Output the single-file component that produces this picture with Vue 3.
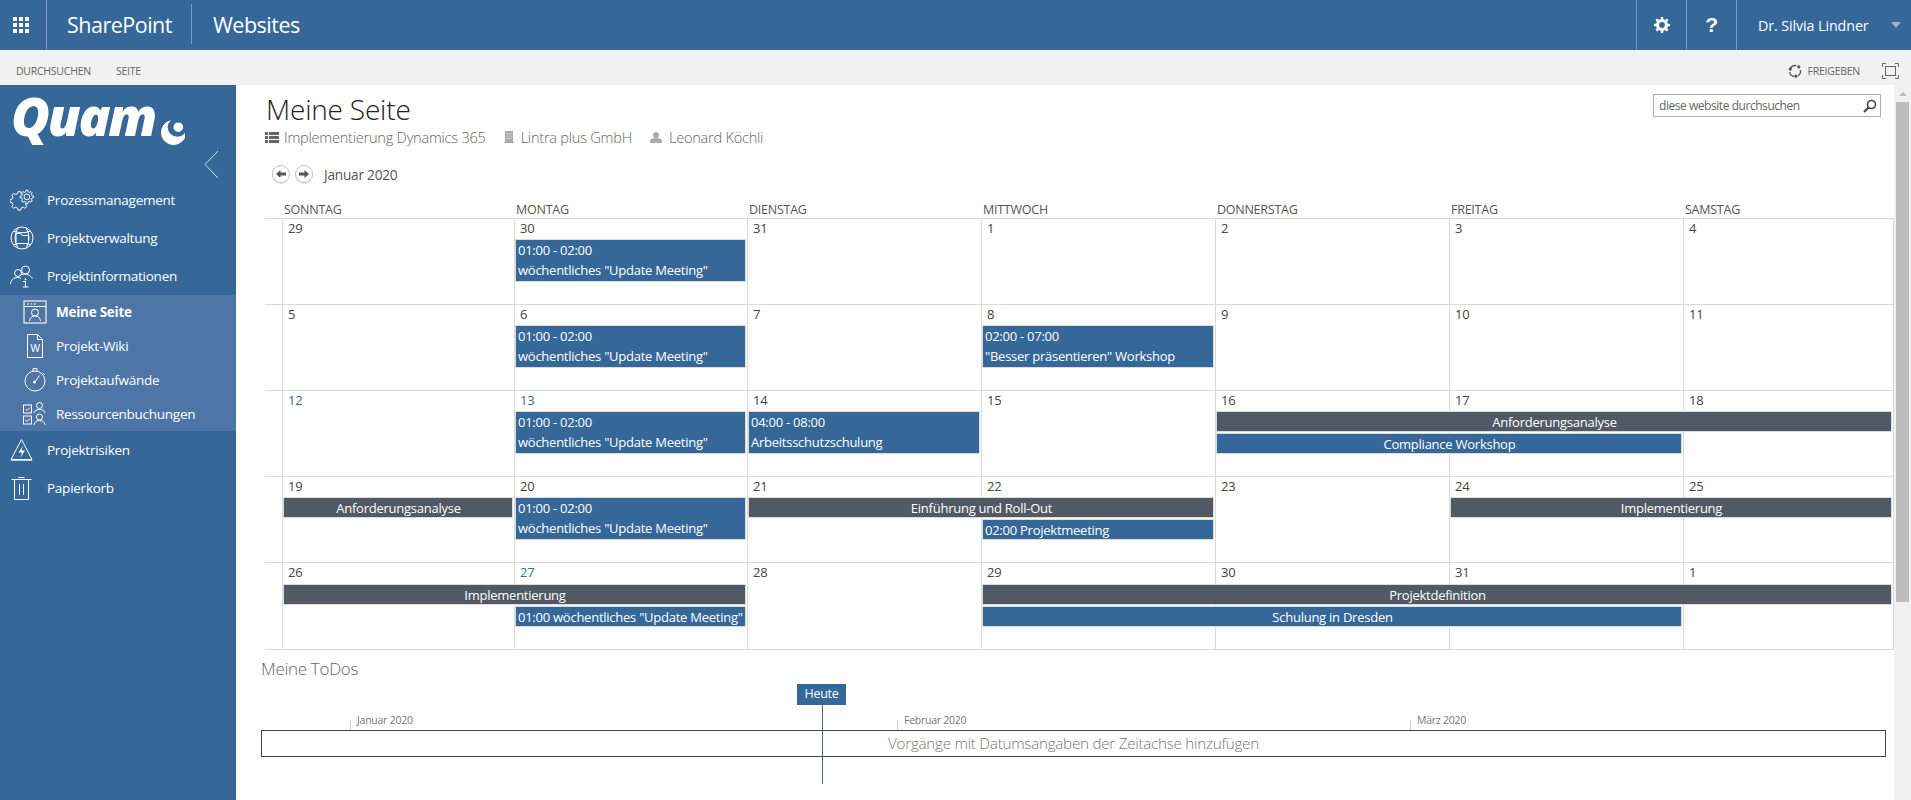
<script setup>
function gear(cx, cy, r1, r2, n) {
  let d = ''
  const step = (Math.PI * 2) / n
  for (let i = 0; i < n; i++) {
    const a = i * step
    const pts = [
      [a - step * 0.3, r1], [a - step * 0.17, r2], [a + step * 0.17, r2], [a + step * 0.3, r1]
    ]
    pts.forEach(([t, r], j) => {
      const x = (cx + Math.cos(t) * r).toFixed(2)
      const y = (cy + Math.sin(t) * r).toFixed(2)
      d += (i === 0 && j === 0 ? 'M' : 'L') + x + ' ' + y + ' '
    })
  }
  return d + 'Z'
}
const bigGear = gear(10.5, 13, 8.4, 10.5, 8)
const smallGear = gear(19, 8.5, 5.8, 7.6, 8)
const topGear = gear(10, 10, 6.6, 9, 8)

const dayNames = ['Sonntag', 'Montag', 'Dienstag', 'Mittwoch', 'Donnerstag', 'Freitag', 'Samstag']
const update = { col: 2, span: 1, row: 2, lines: ['01:00 - 02:00', 'wöchentliches "Update Meeting"'] }
const weeks = [
  {
    days: [29, 30, 31, 1, 2, 3, 4], links: [],
    events: [update]
  },
  {
    days: [5, 6, 7, 8, 9, 10, 11], links: [],
    events: [update, { col: 4, span: 1, row: 2, lines: ['02:00 - 07:00', '"Besser präsentieren" Workshop'] }]
  },
  {
    days: [12, 13, 14, 15, 16, 17, 18], links: [12, 13],
    events: [
      update,
      { col: 3, span: 1, row: 2, lines: ['04:00 - 08:00', 'Arbeitsschutzschulung'] },
      { col: 5, span: 3, row: 2, gray: true, title: 'Anforderungsanalyse' },
      { col: 5, span: 2, row: 3, title: 'Compliance Workshop' }
    ]
  },
  {
    days: [19, 20, 21, 22, 23, 24, 25], links: [],
    events: [
      { col: 1, span: 1, row: 2, gray: true, title: 'Anforderungsanalyse' },
      update,
      { col: 3, span: 2, row: 2, gray: true, title: 'Einführung und Roll-Out' },
      { col: 4, span: 1, row: 3, left: true, title: '02:00 Projektmeeting' },
      { col: 6, span: 2, row: 2, gray: true, title: 'Implementierung' }
    ]
  },
  {
    days: [26, 27, 28, 29, 30, 31, 1], links: [27], last: true,
    events: [
      { col: 1, span: 2, row: 2, gray: true, title: 'Implementierung' },
      { col: 2, span: 1, row: 3, left: true, title: '01:00 wöchentliches "Update Meeting"' },
      { col: 4, span: 4, row: 2, gray: true, title: 'Projektdefinition' },
      { col: 4, span: 3, row: 3, title: 'Schulung in Dresden' }
    ]
  }
]
function evPlace(e) {
  return {
    gridColumn: `${e.col + 1} / span ${e.span}`,
    gridRow: `${e.row} / span ${e.lines ? 2 : 1}`
  }
}
</script>

<template>
  <div class="page">
    <header class="topbar">
      <div class="waffle">
        <svg width="16" height="16" viewBox="0 0 16 16" fill="#fff">
          <rect x="0" y="0" width="4" height="4"/><rect x="6" y="0" width="4" height="4"/><rect x="12" y="0" width="4" height="4"/>
          <rect x="0" y="6" width="4" height="4"/><rect x="6" y="6" width="4" height="4"/><rect x="12" y="6" width="4" height="4"/>
          <rect x="0" y="12" width="4" height="4"/><rect x="6" y="12" width="4" height="4"/><rect x="12" y="12" width="4" height="4"/>
        </svg>
      </div>
      <div class="brand">SharePoint</div>
      <div class="site">Websites</div>
      <div class="top-right">
        <div class="top-btn">
          <svg width="18" height="18" viewBox="0 0 20 20"><path :d="topGear + ' M10 6.8 A3.2 3.2 0 1 0 10 13.2 A3.2 3.2 0 1 0 10 6.8 Z'" fill="#fff" fill-rule="evenodd"/></svg>
        </div>
        <div class="top-btn help">?</div>
        <div class="user">
          <span>Dr. Silvia Lindner</span>
          <i class="caret"></i>
        </div>
      </div>
    </header>

    <div class="ribbon">
      <span class="tab first">DURCHSUCHEN</span>
      <span class="tab">SEITE</span>
      <div class="ribbon-right">
        <svg width="14" height="14" viewBox="0 0 15 15" fill="none">
          <path d="M2.6 4.6 A6 6 0 0 1 9 1.8 M13.3 6.5 A6 6 0 0 1 10.8 12.6 M6.3 13.4 A6 6 0 0 1 1.6 8.8" stroke="#555" stroke-width="1.4"/>
          <circle cx="2.4" cy="5.4" r="1.7" fill="#555"/><circle cx="11.6" cy="3" r="1.7" fill="#555"/><circle cx="8.4" cy="13" r="1.7" fill="#555"/>
        </svg>
        <span class="share">FREIGEBEN</span>
        <svg class="focus" width="17" height="16" viewBox="0 0 17 16" fill="none" stroke="#666">
          <path d="M.5 4V.5H4M13 .5h3.500V4M16.500 12v3.500H13M4 15.500H.5V12"/>
          <rect x="3.500" y="3.500" width="10" height="9" stroke-width="1"/>
        </svg>
      </div>
    </div>

    <div class="body">
      <aside class="sidebar">
        <div class="logo">
          <span class="logo-text">Quam</span>
          <svg class="logo-mark" width="26" height="27" viewBox="0 0 26 27">
            <defs><clipPath id="lm"><rect width="25" height="27"/></clipPath></defs>
            <g clip-path="url(#lm)">
              <circle cx="13" cy="14" r="13" fill="#fff"/>
              <circle cx="17" cy="8.500" r="10" fill="#366799"/>
              <circle cx="18" cy="8.500" r="5" fill="#fff"/>
            </g>
          </svg>
          <svg class="collapse" width="15" height="29" viewBox="0 0 15 29" fill="none"><path d="M14 1 1 14.500 14 28" stroke="#d5deea" stroke-width="1"/></svg>
        </div>
        <nav>
          <a class="nav-item">
            <svg class="ico" width="24" height="24" viewBox="0 0 27 24" fill="none" stroke="#fff" stroke-width="1.100"><path :d="bigGear"/><path :d="smallGear" fill="#366799"/><circle cx="19" cy="8.500" r="3.200"/></svg>
            Prozessmanagement
          </a>
          <a class="nav-item">
            <svg class="ico" width="24" height="24" viewBox="0 0 24 24" fill="none" stroke="#fff" stroke-width="1"><circle cx="12" cy="12" r="11"/><path d="M3.500 5Q12 8.500 20.500 5M3.500 19Q12 15.500 20.500 19M8 1.800Q2 12 8 22.200M16 1.800Q22 12 16 22.200"/><path d="M6 7.500h4.500l1.500 2h6.500v8H6Z" fill="#366799"/></svg>
            Projektverwaltung
          </a>
          <a class="nav-item">
            <svg class="ico" width="24" height="24" viewBox="0 0 24 24" fill="none" stroke="#fff" stroke-width="1"><circle cx="8" cy="9" r="3.500"/><path d="M.5 20c.5-4 3-6.500 7-6.500 1.500 0 2.500.3 3.500 1"/><circle cx="15.500" cy="6" r="4"/><path d="M10.500 11c3-1.500 9-1.500 12 3.500"/><path d="M13 17.500h2.500V23M13 23h5.500"/><circle cx="15.500" cy="15.300" r=".6" fill="#fff"/></svg>
            Projektinformationen
          </a>
          <div class="subnav">
            <a class="sub-item current">
              <svg class="ico" width="24" height="24" viewBox="0 0 24 24" fill="none" stroke="#fff"><rect x="1" y="1" width="22" height="22" stroke-width="1.100"/><path d="M1 6.500h22" stroke-width="1"/><path d="M4 4h2M7.500 4h2M11 4h2" stroke-width="1"/><circle cx="12" cy="12.500" r="3.500" stroke-width="1"/><path d="M6.500 21c.5-3.500 2.500-5 5.500-5s5 1.500 5.500 5" stroke-width="1"/></svg>
              Meine Seite
            </a>
            <a class="sub-item">
              <svg class="ico" width="24" height="24" viewBox="0 0 24 24" fill="none" stroke="#fff" stroke-width="1">
                <path d="M4.500 .5h10l5 5v18h-15ZM14.500.5v5h5"/>
                <text x="12" y="18" text-anchor="middle" fill="#fff" stroke="none" font-size="10" font-family="Liberation Sans, sans-serif">W</text>
              </svg>
              Projekt-Wiki
            </a>
            <a class="sub-item">
              <svg class="ico" width="24" height="24" viewBox="0 0 24 24" fill="none" stroke="#fff" stroke-width="1"><circle cx="12" cy="13" r="10"/><path d="M10 3V.7h4V3M20 5l1.500 1.500"/><path d="M16.500 7.500 12.500 13" stroke-width="1"/><circle cx="11.500" cy="14" r="1.500" fill="#fff" stroke="none"/></svg>
              Projektaufwände
            </a>
            <a class="sub-item">
              <svg class="ico" width="24" height="24" viewBox="0 0 24 24" fill="none" stroke="#fff" stroke-width="1"><rect x=".5" y="3" width="8" height="8"/><rect x=".5" y="14" width="8" height="8"/><path d="M2.500 7l1.500 1.500 3-3M2.500 18l1.500 1.500 3-3"/><circle cx="16.500" cy="3.500" r="3"/><path d="M11 11c.5-2.500 2.500-3.500 5.500-3.500s5 1 5.500 3.500"/><circle cx="16.500" cy="15" r="3"/><path d="M11 23c.5-3 2.500-4.500 5.500-4.500s5 1.500 5.500 4.500"/></svg>
              Ressourcenbuchungen
            </a>
          </div>
          <a class="nav-item">
            <svg class="ico" width="24" height="24" viewBox="0 0 24 24" fill="none" stroke="#fff" stroke-width="1"><path d="M11.500 1.500 1 21.500h21Z"/><path d="M1 22.500h21" stroke-width=".7"/><path d="M13 7.500 8.500 14.500h3.500l-1.500 5 4.500-7h-3.500Z" fill="#fff" stroke="none"/></svg>
            Projektrisiken
          </a>
          <a class="nav-item">
            <svg class="ico" width="24" height="24" viewBox="0 0 24 24" fill="none" stroke="#fff" stroke-width="1"><path d="M1.500 3.500h20M8.500 1.500h6"/><path d="M4.500 3.500v20h14v-20"/><path d="M9.500 8v11M13.500 8v11"/></svg>
            Papierkorb
          </a>
        </nav>
      </aside>

      <main class="main">
        <div class="head">
          <div>
            <h1 class="title">Meine Seite</h1>
            <div class="meta">
              <span class="meta-item">
                <svg width="14" height="11" viewBox="0 0 14 11" fill="#666"><rect width="3" height="3"/><rect x="4" width="10" height="3"/><rect y="4" width="3" height="3"/><rect x="4" y="4" width="10" height="3"/><rect y="8" width="3" height="3"/><rect x="4" y="8" width="10" height="3"/></svg>
                Implementierung Dynamics 365
              </span>
              <span class="meta-item wide">
                <svg width="10" height="12" viewBox="0 0 10 12" fill="#aaa"><path d="M1 0h8v11h1v1H0v-1h1Z"/><path d="M2.500 2h1v1h-1ZM4.500 2h1v1h-1ZM6.500 2h1v1h-1ZM2.500 4.500h1v1h-1ZM4.500 4.500h1v1h-1ZM6.500 4.500h1v1h-1ZM2.500 7h1v1h-1ZM4.500 7h1v1h-1ZM6.500 7h1v1h-1Z" fill="#eee"/></svg>
                Lintra plus GmbH
              </span>
              <span class="meta-item wide">
                <svg width="12" height="11" viewBox="0 0 12 11" fill="#aaa"><circle cx="6" cy="3" r="3"/><path d="M0 11V9c0-2 2.500-3 6-3s6 1 6 3v2Z"/></svg>
                Leonard Köchli
              </span>
            </div>
          </div>
          <div class="search">
            <span>diese website durchsuchen</span>
            <svg width="14" height="14" viewBox="0 0 14 14" fill="none" stroke="#444"><circle cx="8.500" cy="5.500" r="4" stroke-width="1.600"/><path d="M5.500 8.500 1 13" stroke-width="2.200"/></svg>
          </div>
        </div>

        <div class="month-nav">
          <span class="round">
            <svg width="10" height="8" viewBox="0 0 10 8" fill="#555"><path d="M0 4 4.500 0v2.500H10v3H4.500V8Z"/></svg>
          </span>
          <span class="round">
            <svg width="10" height="8" viewBox="0 0 10 8" fill="#555"><path d="M10 4 5.500 0v2.500H0v3h5.500V8Z"/></svg>
          </span>
          <span class="month">Januar 2020</span>
        </div>

        <div class="calendar">
          <div class="weekdays">
            <span></span>
            <span v-for="d in dayNames" :key="d" class="weekday">{{ d }}</span>
          </div>
          <div v-for="(w, wi) in weeks" :key="wi" class="week" :class="{ last: w.last }">
            <div v-for="(d, i) in w.days" :key="i" class="day" :style="{ gridColumn: i + 2 }">
              <span class="num" :class="{ link: w.links.includes(d) }">{{ d }}</span>
            </div>
            <div
              v-for="(e, ei) in w.events"
              :key="ei"
              class="event"
              :class="{ gray: e.gray, center: e.title && !e.left, end: e.col + e.span === 8 }"
              :style="evPlace(e)"
            >
              <template v-if="e.lines">
                <div v-for="l in e.lines" :key="l">{{ l }}</div>
              </template>
              <template v-else>{{ e.title }}</template>
            </div>
          </div>
        </div>

        <h2 class="todos">Meine ToDos</h2>
        <div class="timeline">
          <div class="months">
            <span class="tick m1">Januar 2020</span>
            <span class="tick m2">Februar 2020</span>
            <span class="tick m3">März 2020</span>
          </div>
          <div class="tl-box">Vorgänge mit Datumsangaben der Zeitachse hinzufügen</div>
          <div class="today">Heute</div>
          <div class="today-line"></div>
        </div>
      </main>

      <div class="scroll">
        <i class="up"></i>
        <div class="thumb"></div>
      </div>
    </div>
  </div>
</template>

<style>
html, body { margin: 0; overflow: hidden; background: #fff; }
</style>

<style scoped>
.page {
  width: 1911px;
  height: 800px;
  display: flex;
  flex-direction: column;
  overflow: hidden;
  font-family: "Open Sans", "Noto Sans", sans-serif;
  font-size: 13px;
  letter-spacing: -0.25px;
  color: #444;
}
.topbar {
  height: 50px;
  flex: none;
  background: #366799;
  color: #fff;
  display: flex;
  align-items: stretch;
}
.waffle {
  width: 47px;
  border-right: 1px solid #7b9cc0;
  display: flex;
  align-items: center;
  justify-content: center;
  padding-right: 4px;
  box-sizing: border-box;
}
.brand {
  font-size: 21.500px;
  font-weight: 400;
  letter-spacing: -0.5px;
  display: flex;
  align-items: center;
  padding-left: 20px;
  width: 145px;
  box-sizing: border-box;
  margin: 4px 0 6px;
  border-right: 1px solid #7b9cc0;
}
.site {
  font-size: 21.500px;
  letter-spacing: -0.5px;
  padding-left: 21px;
  display: flex;
  align-items: center;
  margin-bottom: 2px;
}
.top-right { margin-left: auto; display: flex; align-items: stretch; }
.top-btn {
  width: 49px;
  border-left: 1px solid #7b9cc0;
  display: flex;
  align-items: center;
  justify-content: center;
}
.help { font-family: "Liberation Sans", sans-serif; font-size: 21px; font-weight: 700; }
.user {
  width: 175px;
  box-sizing: border-box;
  border-left: 1px solid #7b9cc0;
  display: flex;
  align-items: center;
  padding-left: 21px;
  font-size: 14.300px;
  letter-spacing: -0.1px;
}
.caret {
  margin-left: auto;
  margin-right: 10px;
  width: 0;
  height: 0;
  border-left: 5px solid transparent;
  border-right: 5px solid transparent;
  border-top: 6px solid #9fb3c9;
}
.ribbon {
  height: 35px;
  flex: none;
  background: #f1f1f1;
  display: flex;
  align-items: center;
  font-size: 10.500px;
  letter-spacing: -0.25px;
  color: #666;
  padding-top: 7px;
  box-sizing: border-box;
}
.tab { margin-left: 25px; }
.tab.first { margin-left: 16px; }
.ribbon-right { margin-left: auto; display: flex; align-items: center; padding-right: 12px; margin-top: -1px; }
.share { margin-left: 6px; }
.focus { margin-left: 22px; }
.body { flex: 1; display: flex; min-height: 0; }
.sidebar {
  width: 236px;
  flex: none;
  background: #366799;
  color: #fff;
  font-size: 13.500px;
}
.logo {
  height: 96px;
  position: relative;
  display: flex;
  align-items: flex-start;
  padding-left: 11px;
}
.logo-text {
  font-family: "Open Sans", Lato, sans-serif;
  font-style: italic;
  font-weight: 800;
  font-size: 53px;
  line-height: 64px;
  letter-spacing: -2.300px;
  margin-top: -1px;
}
.logo-mark { margin: 34px 0 0 6px; width: 25px; height: 26px; }
.collapse { position: absolute; left: 204px; top: 65px; }
nav { display: flex; flex-direction: column; }
.nav-item {
  height: 38px;
  display: flex;
  align-items: center;
  padding-left: 10px;
  gap: 13px;
}
.subnav { background: #4d76a6; }
.sub-item {
  height: 34px;
  display: flex;
  align-items: center;
  padding-left: 23px;
  gap: 9px;
}
.sub-item.current { font-weight: 700; }
.ico { flex: none; }
.main {
  flex: 1;
  min-width: 0;
  padding: 0 0 0 25px;
  position: relative;
}
.head { display: flex; justify-content: space-between; padding: 5px 13px 0 5px; }
.title {
  font-size: 28px;
  font-weight: 300;
  line-height: 39px;
  height: 39px;
  margin: 0;
  letter-spacing: -0.2px;
  color: #222;
}
.meta { display: flex; height: 18px; line-height: 17px; margin: -1px 0 0 -1px; }
.meta-item {
  display: flex;
  align-items: center;
  gap: 5px;
  font-size: 14.600px;
  font-weight: 300;
  color: #666;
  margin-right: 18px;
}
.meta-item.wide { gap: 7px; }
.search {
  width: 228px;
  height: 23px;
  box-sizing: border-box;
  margin-top: 4px;
  border: 1px solid #b1b1b1;
  display: flex;
  align-items: center;
  justify-content: space-between;
  padding: 0 3px 0 5px;
  color: #666;
  font-size: 12px;
  letter-spacing: -0.45px;
}
.month-nav {
  height: 22px;
  margin-top: 17px;
  display: flex;
  align-items: center;
  padding-left: 11px;
}
.round {
  width: 16px;
  height: 16px;
  border: 1px solid #c4c4c4;
  border-radius: 50%;
  display: inline-flex;
  align-items: center;
  justify-content: center;
  margin-right: 5px;
  box-shadow: 0 1px 0 #ddd;
}
.month { margin-left: 6px; color: #555; font-size: 13.700px; }
.calendar { margin: 15px 0 0 4px; width: 1629px; }
.weekdays {
  display: grid;
  grid-template-columns: 19px 232px 233px 234px 234px 234px 234px 209px;
  height: 18px;
  line-height: 18px;
  color: #555;
  text-transform: uppercase;
  font-size: 12.500px;
}
.weekday { margin-top: 1px; }
.week {
  display: grid;
  grid-template-columns: 17px 232px 233px 234px 234px 234px 234px 211px;
  grid-template-rows: 20px 22px 22px 1fr;
  height: 86px;
  box-sizing: border-box;
  border-top: 1px solid #dadada;
}
.week.last {
  grid-template-rows: 21px 22px 22px 1fr;
  height: 88px;
  border-bottom: 1px solid #dadada;
}
.day {
  grid-row: 1 / -1;
  border-left: 1px solid #dadada;
  box-sizing: border-box;
}
.day:nth-child(7) { border-right: 1px solid #dadada; }
.num { display: block; padding: 0 0 0 5px; line-height: 18px; color: #444; }
.num.link { color: #3f6a98; }
.event {
  background: #366799;
  color: #fff;
  border: 1px solid #dcdcdc;
  margin: 0 0 1px 1px;
  line-height: 20px;
  padding: 0 1px 0 2px;
  box-sizing: border-box;
  white-space: nowrap;
  overflow: hidden;
  z-index: 1;
}
.event.gray { background: #515965; }
.event.center { text-align: center; }
.event.end { margin-right: 2px; }
.event:not(.end) { margin-right: 1px; }
.todos {
  font-size: 17px;
  font-weight: 300;
  color: #666;
  line-height: 24px;
  margin: 7px 0 0;
  letter-spacing: -0.3px;
}
.timeline { position: relative; width: 1625px; height: 105px; margin-top: 0; }
.months { height: 49px; position: relative; }
.tick {
  position: absolute;
  top: 39px;
  height: 10px;
  border-left: 1px solid #ccc;
  padding-left: 6px;
  font-size: 10.500px;
  line-height: 0;
  color: #777;
  white-space: nowrap;
}
.m1 { left: 89px; }
.m2 { left: 636px; }
.m3 { left: 1149px; }
.tl-box {
  height: 27px;
  box-sizing: border-box;
  border: 1.500px solid #444;
  text-align: center;
  line-height: 24px;
  font-size: 15.200px;
  color: #777;
  font-weight: 300;
}
.today {
  position: absolute;
  left: 536px;
  top: 3px;
  width: 49px;
  height: 21px;
  background: #366799;
  color: #fff;
  text-align: center;
  line-height: 20px;
  font-size: 12.500px;
}
.today-line {
  position: absolute;
  left: 561px;
  top: 24px;
  width: 1px;
  height: 79px;
  background: #366799;
}
.scroll {
  width: 17px;
  flex: none;
  background: #f1f1f1;
  display: flex;
  flex-direction: column;
  align-items: center;
}
.up {
  margin-top: 7px;
  width: 0;
  height: 0;
  border-left: 4px solid transparent;
  border-right: 4px solid transparent;
  border-bottom: 4px solid #bbb;
}
.thumb { width: 13px; height: 500px; margin-top: 6px; background: #bcbcbc; }
</style>
